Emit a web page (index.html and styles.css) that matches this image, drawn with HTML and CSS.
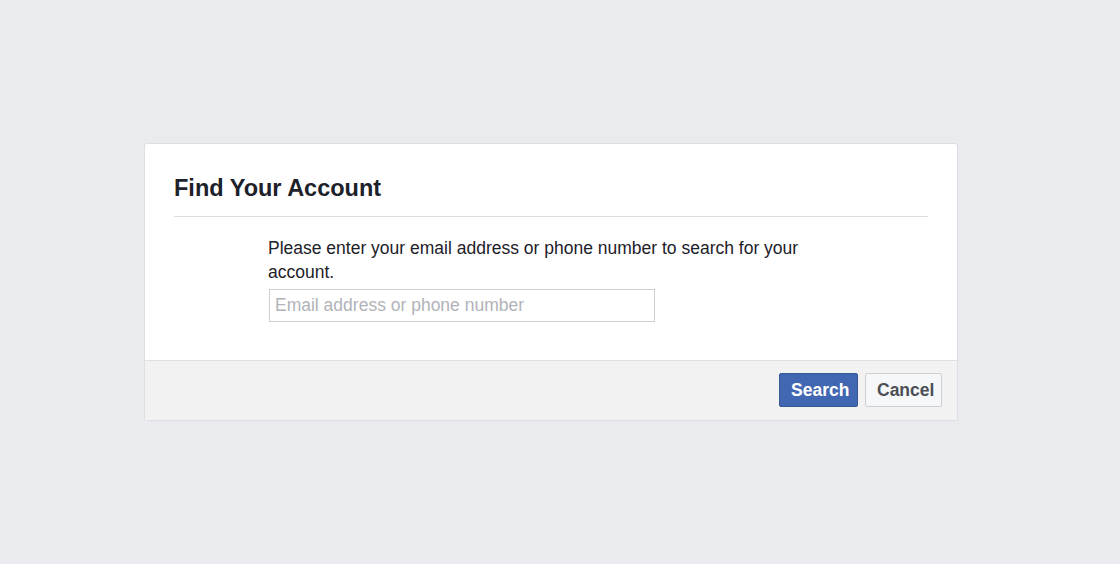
FILE: index.html
```html
<!DOCTYPE html>
<html>
<head>
<meta charset="utf-8">
<link rel="stylesheet" href="styles.css">
</head>
<body>
<div class="page">
  <div class="card">
    <div class="card-header">
      <h2 class="title">Find Your Account</h2>
    </div>
    <div class="card-body">
      <div class="content">
        <p class="desc">Please enter your email address or phone number to search for your account.</p>
        <input class="field" type="text" placeholder="Email address or phone number">
      </div>
    </div>
    <div class="card-footer">
      <button class="btn btn-primary">Search</button>
      <button class="btn btn-secondary">Cancel</button>
    </div>
  </div>
</div>
</body>
</html>
```

FILE: styles.css
```css
html, body {
  margin: 0;
  padding: 0;
  background: #e9ebee;
  font-family: "Liberation Sans", Arial, Helvetica, sans-serif;
}
.page {
  padding-top: 143px;
  padding-left: 144px;
}
.card {
  width: 812px;
  background: #fff;
  border: 1px solid #dddfe2;
  border-radius: 3px;
  box-sizing: content-box;
}
.card-header {
  margin: 0 29px;
  padding-top: 30px;
  padding-bottom: 14px;
  border-bottom: 1px solid #dadde1;
}
.title {
  margin: 0;
  font-size: 23.5px;
  font-weight: bold;
  color: #1d2129;
  line-height: 28px;
}
.card-body {
  padding: 19px 0 38px 123px;
}
.content {
  width: 560px;
}
.desc {
  margin: 0 0 5px 0;
  font-size: 17.5px;
  line-height: 24px;
  color: #1d2129;
}
.field {
  display: block;
  width: 386px;
  height: 33px;
  box-sizing: border-box;
  margin-left: 1px;
  border: 1px solid #ccd0d5;
  padding: 0 5px;
  font-family: inherit;
  font-size: 17.5px;
  color: #1d2129;
  outline: none;
}
.field::placeholder {
  color: #b0b3b8;
}
.card-footer {
  background: #f2f2f2;
  border-top: 1px solid #dddfe2;
  display: flex;
  justify-content: flex-end;
  align-items: center;
  gap: 7px;
  padding: 12px 15px 13px 0;
  border-radius: 0 0 3px 3px;
}
.btn {
  height: 34px;
  box-sizing: border-box;
  border-radius: 2px;
  font-family: inherit;
  font-size: 17.5px;
  font-weight: bold;
  padding: 0 11px;
  cursor: pointer;
}
.btn-primary {
  width: 79px;
  background: #4267b2;
  border: 1px solid #365899;
  color: #fff;
}
.btn-secondary {
  width: 77px;
  background: #f6f7f9;
  border: 1px solid #ced0d4;
  color: #4b4f56;
}
```
